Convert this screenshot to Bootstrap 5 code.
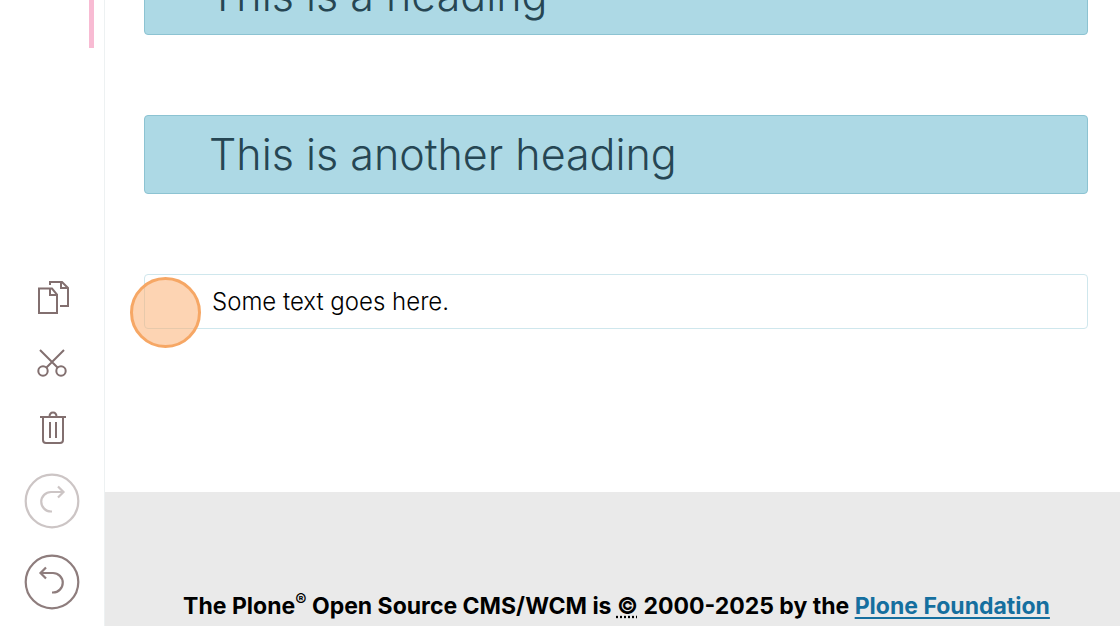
<!DOCTYPE html>
<html lang="en">
<head>
<meta charset="utf-8">
<meta name="viewport" content="width=device-width, initial-scale=1">
<title>Plone page editor</title>
<link href="https://cdn.jsdelivr.net/npm/bootstrap@5.3.0/dist/css/bootstrap.min.css" rel="stylesheet">
<style>
  body { font-family: Inter, "Liberation Sans", sans-serif; color: #000; }
  .editor { height: 100vh; }
  .toolbar { width: 105px; border-right: 1px solid #edf1f2; color: #826f6f; padding-bottom: 16px; }
  .toolbar-accent { width: 5px; height: 48px; right: 10px; background: #f8bbd3; }
  .tool { padding: 0; border: 0; background: none; color: inherit; line-height: 0; }
  .tool-copy, .tool-cut { margin-bottom: 33px; }
  .tool-delete { margin-bottom: 28px; }
  .tool-redo { margin-bottom: 25px; }
  .tool-redo:disabled { opacity: .4; }
  .blocks { margin-top: -44px; padding: 0 32px 0 39px; gap: 80px; }
  .block { border: 1px solid #cfe7ed; border-radius: 4px; padding-left: 67px; }
  .block-selected { background: #add9e5; border-color: #8cc3d2; padding-left: 64px; }
  .block h2 { font-size: 43px; line-height: 77px; font-weight: 300; color: #264653; }
  .block p { font-size: 24px; line-height: 53px; font-weight: 300; }
  .click-marker { width: 71px; height: 71px; left: -15px; top: 2px; border: 3px solid #f6a765; background: rgba(252, 176, 116, .55); }
  .site-footer { background: #eaeaea; padding: 96px 16px 2px 24px; font-size: 23px; line-height: 36px; font-weight: 700; }
  .site-footer sup { font-size: 17px; line-height: 0; top: -8px; }
  .site-footer a { color: #156f9f; text-underline-offset: 3px; }
</style>
</head>
<body>
<div class="editor d-flex overflow-hidden">
  <aside class="toolbar position-relative flex-shrink-0 d-flex flex-column align-items-center justify-content-end" aria-label="Toolbar">
    <span class="toolbar-accent position-absolute top-0"></span>
    <button class="tool tool-copy" type="button" aria-label="Copy blocks">
      <svg width="34" height="36" viewBox="0 0 34 36" fill="none" stroke="currentColor" stroke-width="2"><path d="M4 9.500h13l5 6V34H4zM15 10v6h6M15 6V3h12l6 6v18h-8M26 3v6h6"/></svg>
    </button>
    <button class="tool tool-cut" type="button" aria-label="Cut blocks">
      <svg width="30" height="30" viewBox="0 0 30 30" fill="none" stroke="currentColor" stroke-width="2"><path d="M3 2l17.500 17.500M27 2L9.500 19.500"/><circle cx="6" cy="23" r="4.700"/><circle cx="24" cy="23" r="4.700"/></svg>
    </button>
    <button class="tool tool-delete" type="button" aria-label="Delete blocks">
      <svg width="28" height="34" viewBox="0 0 28 34" fill="none" stroke="currentColor" stroke-width="2"><path d="M2 6h26M5 6v23q0 3 3 3h14q3 0 3-3V6M11.500 6c0-6 7-6 7 0M12 11v16M18 11v16"/></svg>
    </button>
    <button class="tool tool-redo" type="button" aria-label="Redo" disabled>
      <svg width="56" height="56" viewBox="0 0 56 56" fill="none" stroke="currentColor" stroke-width="2.200"><circle cx="28" cy="28" r="26.300"/><path d="M28 38.500h-1a9.750 9.750 0 0 1 0-19.500h12M34 13.500l5.500 5.500-5.500 5.500"/></svg>
    </button>
    <button class="tool" type="button" aria-label="Undo">
      <svg width="56" height="56" viewBox="0 0 56 56" fill="none" stroke="currentColor" stroke-width="2.200" opacity=".9"><circle cx="28" cy="28" r="26.300"/><path d="M28 38.500h1a9.750 9.750 0 0 0 0-19.500H17M22 13.500l-5.500 5.500 5.500 5.500"/></svg>
    </button>
  </aside>
  <div class="flex-grow-1 d-flex flex-column">
    <main class="blocks flex-grow-1 d-flex flex-column">
      <section class="block block-selected"><h2 class="m-0">This is a heading</h2></section>
      <section class="block block-selected"><h2 class="m-0">This is another heading</h2></section>
      <section class="block position-relative">
        <p class="m-0">Some text goes here.</p>
        <span class="click-marker position-absolute rounded-circle"></span>
      </section>
    </main>
    <footer class="site-footer text-center">
      The Plone<sup>®</sup> Open Source CMS/WCM is <abbr title="Copyright">©</abbr> 2000-2025 by the <a href="#">Plone Foundation</a>
    </footer>
  </div>
</div>
<script src="https://cdn.jsdelivr.net/npm/bootstrap@5.3.0/dist/js/bootstrap.bundle.min.js"></script>
</body>
</html>
